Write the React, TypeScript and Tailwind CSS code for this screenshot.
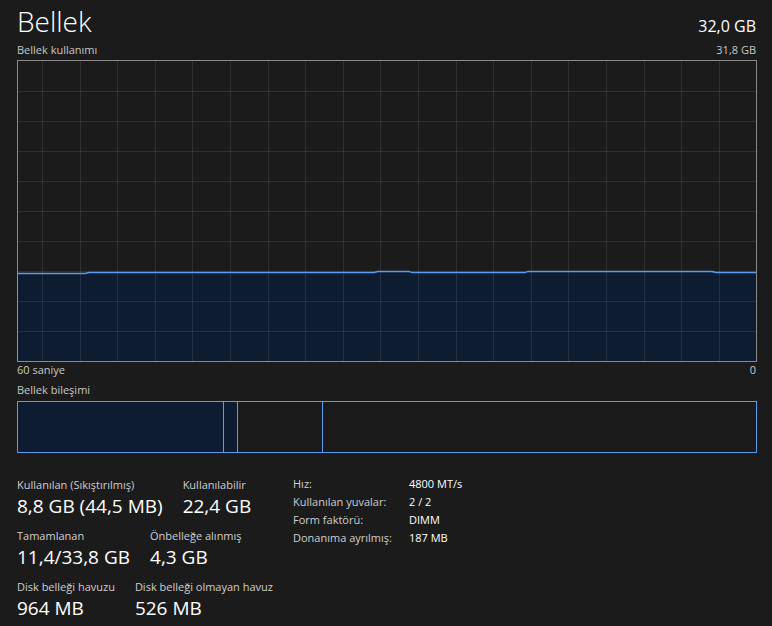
import React from 'react';

const font = { fontFamily: '"Open Sans", "Noto Sans", sans-serif' };

const BLUE = '#5a9cf0';
const NAVY = '#0e1c32';

const UsageChart = () => {
    const cols = Array.from({ length: 19 }, (_, k) => 25.5 + Math.round(37.6 * k));
    const rows = Array.from({ length: 9 }, (_, k) => 31.5 + 30 * k);
    const line =
        'M0.5,213.5 L68,213.5 L72,212.5 L357,212.5 L361,211.5 L392,211.5 L395,212.5 L508,212.5 L511,211.5 L695,211.5 L699,212.5 L739,212.5';

    return (
        <svg width="740" height="302" viewBox="0 0 740 302" className="block">
            <path d={`${line} L739,301 L0.5,301 Z`} fill={NAVY} />
            {cols.map((x) => (
                <line key={`c${x}`} x1={x} y1={1} x2={x} y2={301} stroke="rgba(255,255,255,0.09)" strokeWidth="1" />
            ))}
            {rows.map((y) => (
                <line key={`r${y}`} x1={1} y1={y} x2={739} y2={y} stroke="rgba(255,255,255,0.09)" strokeWidth="1" />
            ))}
            <rect x="0.5" y="0.5" width="739" height="301" fill="none" stroke="#8a8a8a" strokeWidth="1" />
            <path d={line} fill="none" stroke={BLUE} strokeWidth="1.3" />
            <line x1="0.5" y1="213" x2="0.5" y2="301" stroke={BLUE} strokeWidth="1" />
        </svg>
    );
};

const Stat = ({ label, value }: { label: string; value: string }) => (
    <div className="flex flex-col">
        <div className="text-[11px] leading-[16px] whitespace-nowrap text-[#cfcfcf]">{label}</div>
        <div className="text-[19px] leading-[27px] whitespace-nowrap text-white">{value}</div>
    </div>
);

export default function App() {
    const statRows = [
        [
            { label: 'Kullanılan (Sıkıştırılmış)', value: '8,8 GB (44,5 MB)' },
            { label: 'Kullanılabilir', value: '22,4 GB' },
        ],
        [
            { label: 'Tamamlanan', value: '11,4/33,8 GB' },
            { label: 'Önbelleğe alınmış', value: '4,3 GB' },
        ],
        [
            { label: 'Disk belleği havuzu', value: '964 MB' },
            { label: 'Disk belleği olmayan havuz', value: '526 MB' },
        ],
    ];

    const details = [
        ['Hız:', '4800 MT/s'],
        ['Kullanılan yuvalar:', '2 / 2'],
        ['Form faktörü:', 'DIMM'],
        ['Donanıma ayrılmış:', '187 MB'],
    ];

    return (
        <div style={font} className="h-[626px] w-full overflow-hidden bg-[#1b1b1b] pt-[3px] pr-[16px] pl-[17px] text-white">
            {/* Header */}
            <div className="flex h-[36px] items-baseline justify-between overflow-hidden leading-[36px]">
                <div className="text-[28px] font-light">Bellek</div>
                <div className="text-[16px]">32,0 GB</div>
            </div>

            <div className="mt-[4px] flex justify-between text-[11px] leading-[14px] text-[#c8c8c8]">
                <span>Bellek kullanımı</span>
                <span>31,8 GB</span>
            </div>

            {/* Usage chart */}
            <div className="mt-[3px]">
                <UsageChart />
            </div>

            <div className="mt-[1px] flex justify-between text-[11px] leading-[14px] text-[#c8c8c8]">
                <span>60 saniye</span>
                <span>0</span>
            </div>

            <div className="mt-[6px] text-[11px] leading-[14px] text-[#c8c8c8]">Bellek bileşimi</div>

            {/* Memory composition */}
            <div className="mt-[4px] flex h-[52px] w-[740px] border border-[#5a9cf0]">
                <div className="w-[206px] border-r border-[#5a9cf0] bg-[#0e1c32]" />
                <div className="w-[14px] border-r border-[#5a9cf0] bg-[#0e1c32]" />
                <div className="w-[85px] border-r border-[#5a9cf0]" />
                <div className="flex-1" />
            </div>

            {/* Stats */}
            <div className="mt-[24px] flex">
                <div className="flex w-[276px] flex-col gap-[8px]">
                    {statRows.map((row, i) => (
                        <div key={i} className="flex gap-[20px]">
                            {row.map((s) => (
                                <Stat key={s.label} label={s.label} value={s.value} />
                            ))}
                        </div>
                    ))}
                </div>
                <div className="-mt-[2px] flex flex-col text-[11px] leading-[18px]">
                    {details.map(([k, v]) => (
                        <div key={k} className="flex">
                            <span className="w-[116px] text-[#cfcfcf]">{k}</span>
                            <span className="text-white">{v}</span>
                        </div>
                    ))}
                </div>
            </div>
        </div>
    );
}
